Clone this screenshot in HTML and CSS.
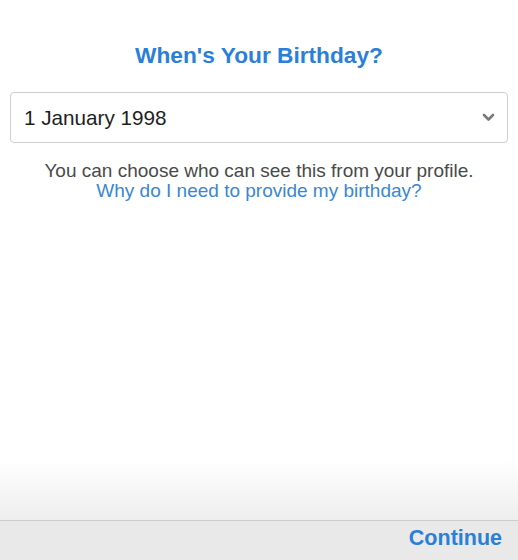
FILE: index.html
```html
<!DOCTYPE html>
<html lang="en">
<head>
<meta charset="utf-8">
<title>Birthday</title>
<link rel="stylesheet" href="styles.css">
</head>
<body>
<div class="screen">
  <main class="content">
    <h1 class="title">When's Your Birthday?</h1>
    <div class="select">
      <span class="select-value">1 January 1998</span>
      <svg class="chevron" width="13" height="9" viewBox="0 0 13 9" aria-hidden="true">
        <path d="M2 2 L6.5 6.5 L11 2" fill="none" stroke="#7a7a7a" stroke-width="2.6" stroke-linecap="round" stroke-linejoin="round"/>
      </svg>
    </div>
    <p class="note">You can choose who can see this from your profile.</p>
    <a class="why" href="#">Why do I need to provide my birthday?</a>
  </main>
  <div class="fade"></div>
  <footer class="toolbar">
    <a class="continue" href="#">Continue</a>
  </footer>
</div>
</body>
</html>
```
FILE: styles.css
```css
html, body {
  margin: 0;
  padding: 0;
  background: #ffffff;
}
body {
  font-family: "Liberation Sans", Arial, sans-serif;
}
.screen {
  width: 518px;
  height: 560px;
  display: flex;
  flex-direction: column;
  overflow: hidden;
}
.content {
  flex: 1;
  display: flex;
  flex-direction: column;
  align-items: center;
  padding: 0 10px 0 10px;
}
.title {
  margin: 41px 0 0;
  font-size: 22.7px;
  line-height: 28px;
  font-weight: 700;
  color: #2a7fd8;
}
.select {
  margin-top: 23px;
  align-self: stretch;
  height: 51px;
  box-sizing: border-box;
  border: 1px solid #cfcfcf;
  border-radius: 4px;
  display: flex;
  align-items: center;
  justify-content: space-between;
  padding: 0 12px 0 13px;
}
.select-value {
  font-size: 20.7px;
  color: #1e1e1e;
}
.chevron {
  display: block;
}
.note {
  margin: 18px 0 0;
  font-size: 19px;
  line-height: 20px;
  color: #4a4a4a;
}
.why {
  font-size: 19px;
  line-height: 20px;
  color: #3a86d3;
  text-decoration: none;
}
.fade {
  height: 60px;
  background: linear-gradient(#ffffff, #eeeeee);
}
.toolbar {
  height: 40px;
  box-sizing: border-box;
  border-top: 1px solid #cdcdcd;
  background: #e9e9e9;
  display: flex;
  align-items: center;
  justify-content: flex-end;
  padding: 0 16px 5px 0;
}
.continue {
  font-size: 21.5px;
  font-weight: 700;
  color: #2a7fd8;
  text-decoration: none;
}
```
